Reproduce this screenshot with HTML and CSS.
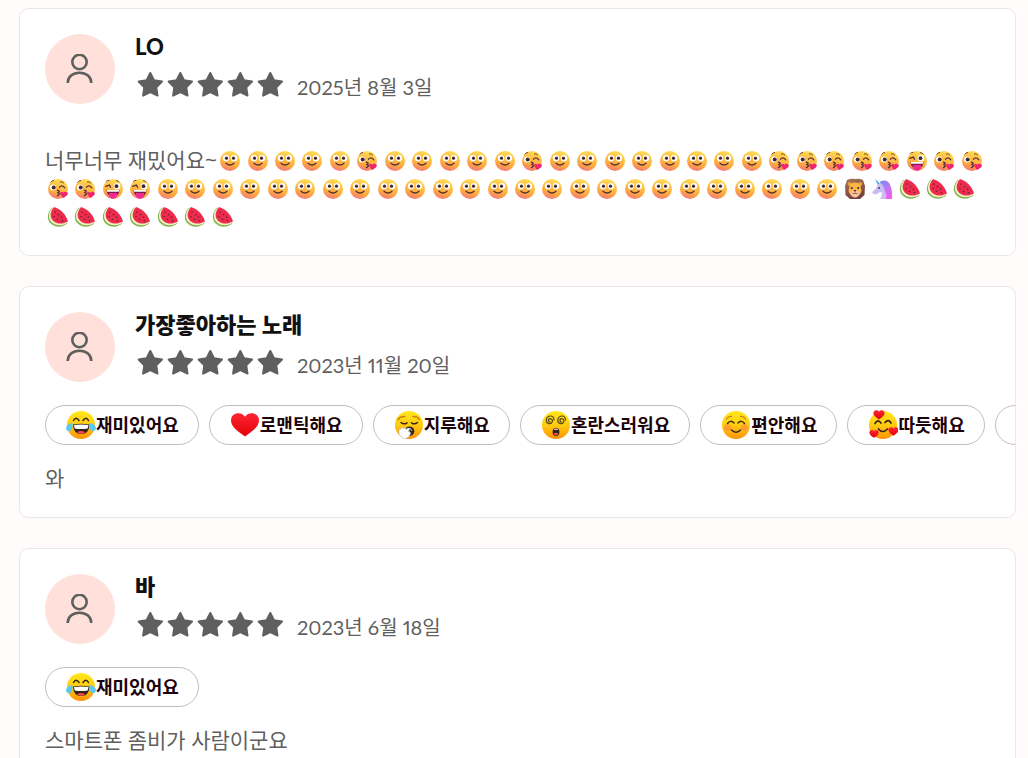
FILE: index.html
```html
<!DOCTYPE html>
<html lang="ko">
<head>
    <meta charset="UTF-8">
    <meta name="viewport" content="width=device-width, initial-scale=1.0">
    <link rel="stylesheet" href="styles.css">
    <title>리뷰</title>
</head>
<body>
    <svg class="sprite" aria-hidden="true">
        <defs>
            <linearGradient id="g-smile" x1="0.7" y1="0" x2="0.4" y2="1">
                <stop offset="0" stop-color="#ffdf55"/>
                <stop offset="0.7" stop-color="#fda83c"/>
                <stop offset="1" stop-color="#f5787c"/>
            </linearGradient>
            <linearGradient id="g-face" x1="0" y1="0" x2="0" y2="1">
                <stop offset="0" stop-color="#ffe81c"/>
                <stop offset="0.5" stop-color="#ffcb10"/>
                <stop offset="1" stop-color="#ff9208"/>
            </linearGradient>
            <linearGradient id="g-heart" x1="0" y1="0" x2="0" y2="1">
                <stop offset="0" stop-color="#ff2632"/>
                <stop offset="1" stop-color="#e20008"/>
            </linearGradient>
            <linearGradient id="g-mane" x1="0" y1="0" x2="0.4" y2="1">
                <stop offset="0" stop-color="#a87958"/>
                <stop offset="1" stop-color="#744143"/>
            </linearGradient>
            <linearGradient id="g-hair" x1="0" y1="0" x2="0.5" y2="1">
                <stop offset="0" stop-color="#7a8cf0"/>
                <stop offset="0.5" stop-color="#b678f4"/>
                <stop offset="1" stop-color="#f25cf0"/>
            </linearGradient>
        </defs>

        <symbol id="user" viewBox="0 0 30 30">
            <circle cx="14.500" cy="8" r="7.200" fill="none" stroke="#5f5f5f" stroke-width="2.600"/>
            <path d="M2.700 29c0-6 5-10.300 11.800-10.300s11.800 4.300 11.800 10.300" fill="none" stroke="#5f5f5f" stroke-width="2.600"/>
        </symbol>
        <symbol id="star" viewBox="0 0 30 30">
            <path d="M15.300 3l3.700 7.300 8 1.300-5.700 5.800 1.200 8.200-7.200-3.500L8.100 25.600l1.200-8.200-5.700-5.800 8-1.300z" fill="#5f5f5f" stroke="#5f5f5f" stroke-width="2" stroke-linejoin="round"/>
        </symbol>

        <!-- text emoji -->
        <symbol id="smile" viewBox="0 0 22 22">
            <circle cx="11" cy="11" r="10" fill="url(#g-smile)"/>
            <circle cx="7" cy="8.200" r="3.100" fill="#fff"/>
            <circle cx="15" cy="8.200" r="3.100" fill="#fff"/>
            <circle cx="7.500" cy="8.200" r="1.600" fill="#3f2830"/>
            <circle cx="14.500" cy="8.200" r="1.600" fill="#3f2830"/>
            <path d="M7 13.200q4 3.600 8 0" fill="none" stroke="#57303c" stroke-width="1.300" stroke-linecap="round"/>
        </symbol>
        <symbol id="kiss" viewBox="0 0 22 22">
            <circle cx="11" cy="11" r="10" fill="url(#g-smile)"/>
            <path d="M3.500 4.500q1.500-2.200 3.500-2M13 4q2.500-.8 4 1.300" fill="none" stroke="#7b4b2a" stroke-width="1"/>
            <circle cx="6" cy="9.500" r="3" fill="#fff"/>
            <circle cx="6.700" cy="9.500" r="2" fill="#3f2830"/>
            <path d="M12.500 9.200q2.500-3 5.300.6" fill="none" stroke="#57303c" stroke-width="1.300" stroke-linecap="round"/>
            <path d="M10.500 12.300q3 .8.600 2.300q2.800 1.200-.600 3" fill="none" stroke="#57303c" stroke-width="1.500" stroke-linecap="round"/>
            <path d="M16 20l-2.800-4c-.8-2 2-3 3-1.200 1.600-2.200 5.300-1 4.600 1.300-.5 1.600-3 3-4.800 3.900z" fill="#f0246f"/>
        </symbol>
        <symbol id="tongue" viewBox="0 0 22 22">
            <circle cx="11" cy="11" r="10" fill="url(#g-smile)"/>
            <path d="M4 3.700q1.500-1.700 3.400-1.300M14 2.700q2-.3 3.300 1.500" fill="none" stroke="#7b4b2a" stroke-width="1"/>
            <path d="M3.700 8.300l3.700-1.200 1.200 2.200" fill="none" stroke="#57303c" stroke-width="1.300" stroke-linecap="round"/>
            <circle cx="15" cy="8.200" r="3.300" fill="#fff"/>
            <circle cx="14.500" cy="8.200" r="1.900" fill="#3f2830"/>
            <path d="M4.500 12h13q-.5 6.500-6.500 6.500T4.500 12z" fill="#7d1d42"/>
            <path d="M5 12h12v1.700H5z" fill="#fff"/>
            <path d="M7 15h8v3.500q-4 4.500-8 0z" fill="#f02b91"/>
        </symbol>
        <symbol id="lion" viewBox="0 0 22 22">
            <path d="M3 2q4-2 8-1 4-1 8 1l2 6-.5 9-4.500 4H6l-4.500-4L1 8z" fill="url(#g-mane)"/>
            <circle cx="5.700" cy="6" r="2" fill="#e8a038"/>
            <circle cx="16.300" cy="6" r="2" fill="#e8a038"/>
            <path d="M5.500 8q1-3.500 5.500-3.500T16.500 8l1 5q-1.500 5.500-6.500 5.500T4.500 13z" fill="#ffb743"/>
            <path d="M6.500 15q1.500-3 4.500-3t4.500 3q-1.500 4.500-4.500 4.500T6.500 15z" fill="#ffc6a6"/>
            <circle cx="7.800" cy="10" r="1.100" fill="#3f2830"/>
            <circle cx="14.200" cy="10" r="1.100" fill="#3f2830"/>
            <path d="M9.300 12h3.400L11 14z" fill="#512c3b"/>
            <path d="M8.500 15.300q1.300 1.300 2.500-.5 1.200 1.800 2.500.5" fill="none" stroke="#6e3b40" stroke-width=".9"/>
        </symbol>
        <symbol id="unicorn" viewBox="0 0 22 22">
            <path d="M9 3.500q7-3 10 3 2.500 5 2 14.500H12z" fill="url(#g-hair)"/>
            <path d="M4 1l5 4.500-2 1.700z" fill="#55a9ed"/>
            <path d="M7.500 6q5-2 7.500 3 1.500 5 0 12H9q3-4 1.500-7-2.500 0-4.500 2-3.500 1-4.700-1.200c0-2 3.700-3.300 4.200-5.800z" fill="#c9bdf1"/>
            <path d="M10.500 5q5-2 7 3.500 2 6-1 12.500-1-5-2.500-8-1-4-3.500-8z" fill="url(#g-hair)"/>
            <circle cx="8" cy="10" r="1" fill="#463a69"/>
        </symbol>
        <symbol id="melon" viewBox="0 0 22 22">
            <path d="M5 1.500C-1 8 0 15 5 18.500s11 2.500 15.500-1z" fill="#7eb44a"/>
            <path d="M5.300 1.700C0 8 1.500 14.200 6 17.300s10 2.200 14.300-.3z" fill="#f5efc8"/>
            <path d="M7 1C2 7 3 12.500 7 15.500s9 2.500 14 0C19 9 14 3 7 1z" fill="#ee2b4c"/>
            <path d="M8 5.500v1.300M7 10v1.300M11.500 8v1.300M14.500 10.500v1.300M10.500 12.800v1.300M15.500 14v1.200" stroke="#5b2436" stroke-width="1.300"/>
        </symbol>

        <!-- mood emoji -->
        <symbol id="joy" viewBox="0 0 30 30">
            <circle cx="15" cy="15" r="14" fill="url(#g-face)"/>
            <path d="M7.500 10.500q2.500-4.500 5.500 0M17 10.500q3-4.500 5.500 0" fill="none" stroke="#35251c" stroke-width="1.500" stroke-linecap="round"/>
            <path d="M7 14.500q8-1.500 16.500 0-.5 9.500-8.300 9.500T7 14.500z" fill="#35221f"/>
            <path d="M8 15q7-1.200 14.500 0l-.8 3.500q-6.700 1-13 0z" fill="#fff"/>
            <path d="M11 22.200q4-2.500 8.200 0-4 3-8.200 0z" fill="#f24a48"/>
            <path d="M6.500 13Q0 14 0 18.500 1 22.500 5 20.500 7 18 6.500 13zM23.500 13q6.500 1 6.500 5.500-1 4-5 2-2-2.500-1.500-7.500z" fill="#5bc8f2"/>
        </symbol>
        <symbol id="heart" viewBox="0 0 30 30">
            <path d="M15 26.500C8 21 1 17 1 10.200 1 3 11 .500 15 6.800 19 .5 29 3 29 10.200 29 17 22 21 15 26.500z" fill="url(#g-heart)"/>
        </symbol>
        <symbol id="yawn" viewBox="0 0 30 30">
            <circle cx="15" cy="15" r="14" fill="url(#g-face)"/>
            <path d="M4 9.500q2.500-3.500 7-3M19 6.500q4-.5 6.500 3" fill="none" stroke="#c98613" stroke-width="1.500" stroke-linecap="round"/>
            <path d="M7 12.500q3 2.500 6 .3M17.500 12.800q3 2.200 6-.3" fill="none" stroke="#35251c" stroke-width="1.500" stroke-linecap="round"/>
            <circle cx="15.500" cy="21.200" r="4.800" fill="#302724"/>
            <path d="M5 20.500q0-2 1.700-1.200l.6-1.300q1.400-1 2 .6l1.200-.6q1.300-.2 1.500 1.400 2-1.500 3.200-1.300 1.500 1.300-1 3 2.500.5 2.300 2.500-1.500 4.500-5.500 5-4-.5-6-4.500z" fill="#fff" stroke="#bebebe" stroke-width=".7"/>
            <path d="M16 18l2 3" stroke="#c5c5cc" stroke-width="1"/>
        </symbol>
        <symbol id="dizzy" viewBox="0 0 30 30">
            <circle cx="15" cy="15" r="14" fill="url(#g-face)"/>
            <path id="spiral" d="M9 12q-1.800-.3-1.500-2 .5-1.700 2.200-1.200 2.300.8 1.600 3-1 2.400-3.500 1.800-3-1-2.400-4.300 1-3.500 4.600-3.300Q13 6.500 13 10" fill="none" stroke="#554519" stroke-width="1.200" stroke-linecap="round"/>
            <use href="#spiral" x="11.500"/>
            <ellipse cx="15" cy="22" rx="3.400" ry="4" fill="#35221f"/>
            <ellipse cx="15" cy="24" rx="2.300" ry="1.300" fill="#e84a48"/>
            <path d="M13.200 19.300h3.600" stroke="#fff" stroke-width="1"/>
        </symbol>
        <symbol id="calm" viewBox="0 0 30 30">
            <circle cx="15" cy="15" r="14" fill="url(#g-face)"/>
            <circle cx="6.500" cy="17.500" r="3.500" fill="#ff7b52" opacity=".5"/>
            <circle cx="23.500" cy="17.500" r="3.500" fill="#ff7b52" opacity=".5"/>
            <path d="M5.500 9q2-3 5-2.500M19.500 6.500q3-.5 5 2.500" fill="none" stroke="#c98613" stroke-width="1.300" stroke-linecap="round"/>
            <path d="M6.500 13.500q3-4 6.500-.5M17 13q3.500-3.500 6.500.5M10.500 20q4.500 4.500 9 0" fill="none" stroke="#35251c" stroke-width="1.500" stroke-linecap="round"/>
        </symbol>
        <symbol id="love" viewBox="0 0 30 30">
            <circle cx="15" cy="15" r="14" fill="url(#g-face)"/>
            <path d="M7 13.500q3-5 6-.5M17 12.500q3.500-4 6 .5M10.500 19q4 5 9 0" fill="none" stroke="#35251c" stroke-width="1.700" stroke-linecap="round"/>
            <use href="#heart" x="5" y="-1" width="12" height="12"/>
            <use href="#heart" x="1" y="19" width="10" height="10"/>
            <use href="#heart" x="20" y="16" width="11" height="11"/>
        </symbol>
        <symbol id="book" viewBox="0 0 30 30">
            <rect x="0" y="4" width="28" height="19" rx="1" fill="#7a4310"/>
        </symbol>
    </svg>

    <main class="reviews">
        <article class="review">
            <header class="review-header">
                <div class="avatar"><svg><use href="#user"/></svg></div>
                <div class="author">
                    <h3>LO</h3>
                    <div class="rating">
                        <div class="stars" role="img" aria-label="5">
                            <svg><use href="#star"/></svg><svg><use href="#star"/></svg><svg><use href="#star"/></svg><svg><use href="#star"/></svg><svg><use href="#star"/></svg>
                        </div>
                        <time datetime="2025-08-03">2025년 8월 3일</time>
                    </div>
                </div>
            </header>
            <ul class="moods"></ul>
            <p class="review-text">너무너무 재밌어요~<svg><use href="#smile"/></svg>
                <svg><use href="#smile"/></svg> <svg><use href="#smile"/></svg> <svg><use href="#smile"/></svg> <svg><use href="#smile"/></svg>
                <svg><use href="#kiss"/></svg>
                <svg><use href="#smile"/></svg> <svg><use href="#smile"/></svg> <svg><use href="#smile"/></svg> <svg><use href="#smile"/></svg> <svg><use href="#smile"/></svg>
                <svg><use href="#kiss"/></svg>
                <svg><use href="#smile"/></svg> <svg><use href="#smile"/></svg> <svg><use href="#smile"/></svg> <svg><use href="#smile"/></svg>
                <svg><use href="#smile"/></svg> <svg><use href="#smile"/></svg> <svg><use href="#smile"/></svg> <svg><use href="#smile"/></svg>
                <svg><use href="#kiss"/></svg> <svg><use href="#kiss"/></svg> <svg><use href="#kiss"/></svg> <svg><use href="#kiss"/></svg> <svg><use href="#kiss"/></svg>
                <svg><use href="#tongue"/></svg>
                <svg><use href="#kiss"/></svg> <svg><use href="#kiss"/></svg> <svg><use href="#kiss"/></svg> <svg><use href="#kiss"/></svg>
                <svg><use href="#tongue"/></svg> <svg><use href="#tongue"/></svg>
                <svg><use href="#smile"/></svg> <svg><use href="#smile"/></svg> <svg><use href="#smile"/></svg> <svg><use href="#smile"/></svg> <svg><use href="#smile"/></svg>
                <svg><use href="#smile"/></svg> <svg><use href="#smile"/></svg> <svg><use href="#smile"/></svg> <svg><use href="#smile"/></svg> <svg><use href="#smile"/></svg>
                <svg><use href="#smile"/></svg> <svg><use href="#smile"/></svg> <svg><use href="#smile"/></svg> <svg><use href="#smile"/></svg> <svg><use href="#smile"/></svg>
                <svg><use href="#smile"/></svg> <svg><use href="#smile"/></svg> <svg><use href="#smile"/></svg> <svg><use href="#smile"/></svg> <svg><use href="#smile"/></svg>
                <svg><use href="#smile"/></svg> <svg><use href="#smile"/></svg> <svg><use href="#smile"/></svg> <svg><use href="#smile"/></svg> <svg><use href="#smile"/></svg>
                <svg><use href="#lion"/></svg> <svg><use href="#unicorn"/></svg>
                <svg><use href="#melon"/></svg> <svg><use href="#melon"/></svg> <svg><use href="#melon"/></svg> <svg><use href="#melon"/></svg> <svg><use href="#melon"/></svg>
                <svg><use href="#melon"/></svg> <svg><use href="#melon"/></svg> <svg><use href="#melon"/></svg> <svg><use href="#melon"/></svg> <svg><use href="#melon"/></svg>
            </p>
        </article>

        <article class="review">
            <header class="review-header">
                <div class="avatar"><svg><use href="#user"/></svg></div>
                <div class="author">
                    <h3>가장좋아하는 노래</h3>
                    <div class="rating">
                        <div class="stars" role="img" aria-label="5">
                            <svg><use href="#star"/></svg><svg><use href="#star"/></svg><svg><use href="#star"/></svg><svg><use href="#star"/></svg><svg><use href="#star"/></svg>
                        </div>
                        <time datetime="2023-11-20">2023년 11월 20일</time>
                    </div>
                </div>
            </header>
            <ul class="moods">
                <li><svg><use href="#joy"/></svg>재미있어요</li>
                <li><svg><use href="#heart"/></svg>로맨틱해요</li>
                <li><svg><use href="#yawn"/></svg>지루해요</li>
                <li><svg><use href="#dizzy"/></svg>혼란스러워요</li>
                <li><svg><use href="#calm"/></svg>편안해요</li>
                <li><svg><use href="#love"/></svg>따듯해요</li>
                <li><svg><use href="#book"/></svg></li>
            </ul>
            <p class="review-text">와</p>
        </article>

        <article class="review">
            <header class="review-header">
                <div class="avatar"><svg><use href="#user"/></svg></div>
                <div class="author">
                    <h3>바</h3>
                    <div class="rating">
                        <div class="stars" role="img" aria-label="5">
                            <svg><use href="#star"/></svg><svg><use href="#star"/></svg><svg><use href="#star"/></svg><svg><use href="#star"/></svg><svg><use href="#star"/></svg>
                        </div>
                        <time datetime="2023-06-18">2023년 6월 18일</time>
                    </div>
                </div>
            </header>
            <ul class="moods">
                <li><svg><use href="#joy"/></svg>재미있어요</li>
            </ul>
            <p class="review-text">스마트폰 좀비가 사람이군요</p>
        </article>
    </main>
</body>
</html>
```

FILE: styles.css
```css
* {
    box-sizing: border-box;
}

html {
    scrollbar-width: none;
}

body {
    margin: 0;
    background-color: #fffbfa;
    color: #5f5f5f;
    font-family: Lato, "Noto Sans CJK KR", sans-serif;
    font-size: 20px;
    line-height: 28px;
}

.sprite {
    position: absolute;
    width: 0;
    height: 0;
}

.reviews {
    display: flex;
    flex-direction: column;
    gap: 30px;
    padding: 8px 12px 30px 19px;
}

.review {
    padding: 25px;
    background-color: #fff;
    border: 1px solid #e8e8e8;
    border-radius: 10px;
    overflow: hidden;
}

.review-header {
    display: flex;
    gap: 20px;
}

.avatar {
    display: flex;
    align-items: center;
    justify-content: center;
    flex: none;
    width: 70px;
    height: 70px;
    border-radius: 50%;
    background-color: #ffe0db;
}

.avatar svg {
    width: 30px;
    height: 30px;
}

.author {
    display: flex;
    flex-direction: column;
    gap: 10px;
}

.author h3 {
    margin: 0;
    color: #111;
    font-size: 22px;
    font-weight: 900;
    line-height: 26px;
}

.rating {
    display: flex;
    align-items: flex-start;
    gap: 12px;
}

.stars {
    display: flex;
}

.stars svg {
    width: 30px;
    height: 30px;
}

.rating time {
    padding-top: 3px;
    font-variant-numeric: proportional-nums;
}

.moods {
    display: flex;
    gap: 10px;
    margin: 23px -25px 19px 0;
    padding: 0;
    list-style: none;
    overflow: hidden;
}

.moods li {
    display: flex;
    align-items: center;
    flex: none;
    height: 40px;
    padding: 0 19px 0 20px;
    border: 1px solid #c4bcbe;
    border-radius: 20px;
    color: #1c0209;
    font-size: 18px;
    font-weight: 700;
}

.moods svg {
    width: 30px;
    height: 30px;
}

.review-text {
    margin: 0;
    font-family: "Open Sans", "Noto Sans CJK KR", sans-serif;
    font-size: 21px;
}

.review-text svg {
    width: 22px;
    height: 22px;
    margin: 0 -2px 0 2px;
    vertical-align: -4px;
}
```
